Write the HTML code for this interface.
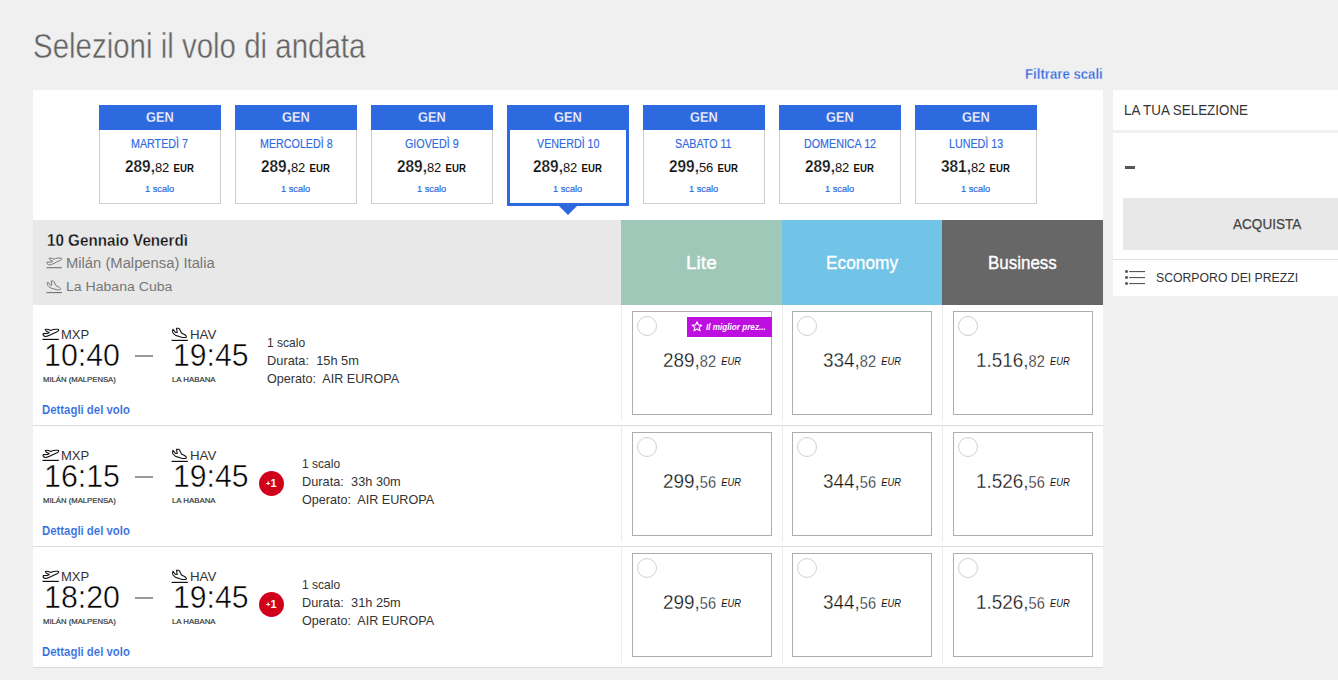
<!DOCTYPE html><html><head><meta charset="utf-8"><style>body{margin:0;width:1338px;height:680px;overflow:hidden;background:#f0f0f0;font-family:"Liberation Sans",sans-serif;position:relative}.t{position:absolute;line-height:1;white-space:nowrap}</style></head><body>
<div style="position:absolute;left:33px;top:90px;width:1070px;height:578px;background:#fff"></div>
<div style="position:absolute;left:99px;top:105px;width:122px;height:25px;background:#2d69df"></div>
<div style="position:absolute;left:99px;top:130px;width:120px;height:73px;border:1px solid #cfcfcf;border-top:0;background:#fff"></div>
<div style="position:absolute;left:235px;top:105px;width:122px;height:25px;background:#2d69df"></div>
<div style="position:absolute;left:235px;top:130px;width:120px;height:73px;border:1px solid #cfcfcf;border-top:0;background:#fff"></div>
<div style="position:absolute;left:371px;top:105px;width:122px;height:25px;background:#2d69df"></div>
<div style="position:absolute;left:371px;top:130px;width:120px;height:73px;border:1px solid #cfcfcf;border-top:0;background:#fff"></div>
<div style="position:absolute;left:507px;top:105px;width:122px;height:101px;background:#2d69df"></div>
<div style="position:absolute;left:510px;top:130px;width:116px;height:73px;background:#fff"></div>
<div style="position:absolute;left:559px;top:206px;width:0;height:0;border-left:9px solid transparent;border-right:9px solid transparent;border-top:9px solid #2d69df"></div>
<div style="position:absolute;left:643px;top:105px;width:122px;height:25px;background:#2d69df"></div>
<div style="position:absolute;left:643px;top:130px;width:120px;height:73px;border:1px solid #cfcfcf;border-top:0;background:#fff"></div>
<div style="position:absolute;left:779px;top:105px;width:122px;height:25px;background:#2d69df"></div>
<div style="position:absolute;left:779px;top:130px;width:120px;height:73px;border:1px solid #cfcfcf;border-top:0;background:#fff"></div>
<div style="position:absolute;left:915px;top:105px;width:122px;height:25px;background:#2d69df"></div>
<div style="position:absolute;left:915px;top:130px;width:120px;height:73px;border:1px solid #cfcfcf;border-top:0;background:#fff"></div>
<div style="position:absolute;left:33px;top:220px;width:588px;height:85px;background:#e8e8e8"></div>
<div style="position:absolute;left:621px;top:220px;width:161px;height:85px;background:#9fc8b9"></div>
<div style="position:absolute;left:782px;top:220px;width:160px;height:85px;background:#71c4e8"></div>
<div style="position:absolute;left:942px;top:220px;width:161px;height:85px;background:#676767"></div>
<svg width="22" height="18" viewBox="0 0 22 18" style="position:absolute;left:43.9px;top:254px;transform:scale(0.95);transform-origin:0 0"><path d="M5.3 4.5 C7 4 9 4.6 10.6 5.5 C12.5 4.5 14.5 4 18 4.3 C19.2 4.6 19 5.6 17.5 6.5 L9.5 10.3 C8 11 6 11.6 5 11.4 C3.5 11 2.8 10 3.2 8.6 L7.6 8.5 L9.2 7.6 L6.4 6.2 Z" fill="none" stroke="#777" stroke-width="1.05" stroke-linejoin="round"/><path d="M2.5 14.4 H18.8" stroke="#777" stroke-width="1.2"/></svg>
<svg width="22" height="18" viewBox="0 0 22 18" style="position:absolute;left:44.4px;top:276.5px;transform:scale(0.95);transform-origin:0 0"><path d="M4 5.3 C3.3 6.5 3.3 8 4 9 C5 10.5 7.5 12 10 12.4 L13.5 13.5 C15 13.6 16.5 13.6 17.2 13.2 C17.8 12.6 17 11.3 15 10.3 L12.5 9 L10.5 5 C10.2 4.4 9.8 4.2 9.5 4.2 L7.5 4.2 L8.2 8.5 L6.5 8.5 Z" fill="none" stroke="#777" stroke-width="1.05" stroke-linejoin="round"/><path d="M2.6 16.4 H18.8" stroke="#777" stroke-width="1.2"/></svg>
<div style="position:absolute;left:33px;top:425px;width:1070px;height:1px;background:#dcdcdc"></div>
<div style="position:absolute;left:621px;top:305px;width:1px;height:116px;background:#ececec"></div>
<div style="position:absolute;left:782px;top:305px;width:1px;height:116px;background:#ececec"></div>
<div style="position:absolute;left:942px;top:305px;width:1px;height:116px;background:#ececec"></div>
<svg width="22" height="18" viewBox="0 0 22 18" style="position:absolute;left:40px;top:325px;transform:scale(1);transform-origin:0 0"><path d="M5.3 4.5 C7 4 9 4.6 10.6 5.5 C12.5 4.5 14.5 4 18 4.3 C19.2 4.6 19 5.6 17.5 6.5 L9.5 10.3 C8 11 6 11.6 5 11.4 C3.5 11 2.8 10 3.2 8.6 L7.6 8.5 L9.2 7.6 L6.4 6.2 Z" fill="none" stroke="#111" stroke-width="1.1" stroke-linejoin="round"/><path d="M2.5 14.4 H18.8" stroke="#111" stroke-width="1.2"/></svg>
<svg width="22" height="18" viewBox="0 0 22 18" style="position:absolute;left:169px;top:324px;transform:scale(1);transform-origin:0 0"><path d="M4 5.3 C3.3 6.5 3.3 8 4 9 C5 10.5 7.5 12 10 12.4 L13.5 13.5 C15 13.6 16.5 13.6 17.2 13.2 C17.8 12.6 17 11.3 15 10.3 L12.5 9 L10.5 5 C10.2 4.4 9.8 4.2 9.5 4.2 L7.5 4.2 L8.2 8.5 L6.5 8.5 Z" fill="none" stroke="#111" stroke-width="1.1" stroke-linejoin="round"/><path d="M2.6 16.4 H18.8" stroke="#111" stroke-width="1.2"/></svg>
<div style="position:absolute;left:135px;top:355px;width:18px;height:2px;background:#999"></div>
<div style="position:absolute;left:632px;top:311px;width:138px;height:102px;border:1px solid #adadad;background:#fff"></div>
<div style="position:absolute;left:637px;top:316px;width:18px;height:18px;border:1px solid #d0d0d0;border-radius:50%"></div>
<div style="position:absolute;left:792px;top:311px;width:138px;height:102px;border:1px solid #adadad;background:#fff"></div>
<div style="position:absolute;left:797px;top:316px;width:18px;height:18px;border:1px solid #d0d0d0;border-radius:50%"></div>
<div style="position:absolute;left:953px;top:311px;width:138px;height:102px;border:1px solid #adadad;background:#fff"></div>
<div style="position:absolute;left:958px;top:316px;width:18px;height:18px;border:1px solid #d0d0d0;border-radius:50%"></div>
<div style="position:absolute;left:687px;top:317px;width:85px;height:20px;background:#bd0fe0"></div>
<svg width="12" height="11" viewBox="0 0 12 11" style="position:absolute;left:691px;top:321px"><path d="M6 0.8 L7.4 3.9 L10.8 4.2 L8.2 6.4 L9 9.8 L6 8 L3 9.8 L3.8 6.4 L1.2 4.2 L4.6 3.9 Z" fill="none" stroke="#fff" stroke-width="1.1" stroke-linejoin="round"/></svg>
<div style="position:absolute;left:33px;top:546px;width:1070px;height:1px;background:#dcdcdc"></div>
<div style="position:absolute;left:621px;top:426px;width:1px;height:116px;background:#ececec"></div>
<div style="position:absolute;left:782px;top:426px;width:1px;height:116px;background:#ececec"></div>
<div style="position:absolute;left:942px;top:426px;width:1px;height:116px;background:#ececec"></div>
<svg width="22" height="18" viewBox="0 0 22 18" style="position:absolute;left:40px;top:446px;transform:scale(1);transform-origin:0 0"><path d="M5.3 4.5 C7 4 9 4.6 10.6 5.5 C12.5 4.5 14.5 4 18 4.3 C19.2 4.6 19 5.6 17.5 6.5 L9.5 10.3 C8 11 6 11.6 5 11.4 C3.5 11 2.8 10 3.2 8.6 L7.6 8.5 L9.2 7.6 L6.4 6.2 Z" fill="none" stroke="#111" stroke-width="1.1" stroke-linejoin="round"/><path d="M2.5 14.4 H18.8" stroke="#111" stroke-width="1.2"/></svg>
<svg width="22" height="18" viewBox="0 0 22 18" style="position:absolute;left:169px;top:445px;transform:scale(1);transform-origin:0 0"><path d="M4 5.3 C3.3 6.5 3.3 8 4 9 C5 10.5 7.5 12 10 12.4 L13.5 13.5 C15 13.6 16.5 13.6 17.2 13.2 C17.8 12.6 17 11.3 15 10.3 L12.5 9 L10.5 5 C10.2 4.4 9.8 4.2 9.5 4.2 L7.5 4.2 L8.2 8.5 L6.5 8.5 Z" fill="none" stroke="#111" stroke-width="1.1" stroke-linejoin="round"/><path d="M2.6 16.4 H18.8" stroke="#111" stroke-width="1.2"/></svg>
<div style="position:absolute;left:135px;top:476px;width:18px;height:2px;background:#999"></div>
<div style="position:absolute;left:259px;top:471px;width:25px;height:25px;border-radius:50%;background:#d0021b"></div>
<div style="position:absolute;left:632px;top:432px;width:138px;height:102px;border:1px solid #adadad;background:#fff"></div>
<div style="position:absolute;left:637px;top:437px;width:18px;height:18px;border:1px solid #d0d0d0;border-radius:50%"></div>
<div style="position:absolute;left:792px;top:432px;width:138px;height:102px;border:1px solid #adadad;background:#fff"></div>
<div style="position:absolute;left:797px;top:437px;width:18px;height:18px;border:1px solid #d0d0d0;border-radius:50%"></div>
<div style="position:absolute;left:953px;top:432px;width:138px;height:102px;border:1px solid #adadad;background:#fff"></div>
<div style="position:absolute;left:958px;top:437px;width:18px;height:18px;border:1px solid #d0d0d0;border-radius:50%"></div>
<div style="position:absolute;left:33px;top:667px;width:1070px;height:1px;background:#dcdcdc"></div>
<div style="position:absolute;left:621px;top:547px;width:1px;height:116px;background:#ececec"></div>
<div style="position:absolute;left:782px;top:547px;width:1px;height:116px;background:#ececec"></div>
<div style="position:absolute;left:942px;top:547px;width:1px;height:116px;background:#ececec"></div>
<svg width="22" height="18" viewBox="0 0 22 18" style="position:absolute;left:40px;top:567px;transform:scale(1);transform-origin:0 0"><path d="M5.3 4.5 C7 4 9 4.6 10.6 5.5 C12.5 4.5 14.5 4 18 4.3 C19.2 4.6 19 5.6 17.5 6.5 L9.5 10.3 C8 11 6 11.6 5 11.4 C3.5 11 2.8 10 3.2 8.6 L7.6 8.5 L9.2 7.6 L6.4 6.2 Z" fill="none" stroke="#111" stroke-width="1.1" stroke-linejoin="round"/><path d="M2.5 14.4 H18.8" stroke="#111" stroke-width="1.2"/></svg>
<svg width="22" height="18" viewBox="0 0 22 18" style="position:absolute;left:169px;top:566px;transform:scale(1);transform-origin:0 0"><path d="M4 5.3 C3.3 6.5 3.3 8 4 9 C5 10.5 7.5 12 10 12.4 L13.5 13.5 C15 13.6 16.5 13.6 17.2 13.2 C17.8 12.6 17 11.3 15 10.3 L12.5 9 L10.5 5 C10.2 4.4 9.8 4.2 9.5 4.2 L7.5 4.2 L8.2 8.5 L6.5 8.5 Z" fill="none" stroke="#111" stroke-width="1.1" stroke-linejoin="round"/><path d="M2.6 16.4 H18.8" stroke="#111" stroke-width="1.2"/></svg>
<div style="position:absolute;left:135px;top:597px;width:18px;height:2px;background:#999"></div>
<div style="position:absolute;left:259px;top:592px;width:25px;height:25px;border-radius:50%;background:#d0021b"></div>
<div style="position:absolute;left:632px;top:553px;width:138px;height:102px;border:1px solid #adadad;background:#fff"></div>
<div style="position:absolute;left:637px;top:558px;width:18px;height:18px;border:1px solid #d0d0d0;border-radius:50%"></div>
<div style="position:absolute;left:792px;top:553px;width:138px;height:102px;border:1px solid #adadad;background:#fff"></div>
<div style="position:absolute;left:797px;top:558px;width:18px;height:18px;border:1px solid #d0d0d0;border-radius:50%"></div>
<div style="position:absolute;left:953px;top:553px;width:138px;height:102px;border:1px solid #adadad;background:#fff"></div>
<div style="position:absolute;left:958px;top:558px;width:18px;height:18px;border:1px solid #d0d0d0;border-radius:50%"></div>
<div style="position:absolute;left:1113px;top:90px;width:225px;height:40px;background:#fff"></div>
<div style="position:absolute;left:1113px;top:133px;width:225px;height:126px;background:#fff"></div>
<div style="position:absolute;left:1113px;top:259px;width:225px;height:1px;background:#dedede"></div>
<div style="position:absolute;left:1113px;top:260px;width:225px;height:36px;background:#fff"></div>
<div style="position:absolute;left:1125px;top:166px;width:10px;height:3px;background:#555"></div>
<div style="position:absolute;left:1123px;top:198px;width:215px;height:52px;background:#e8e8e8"></div>
<svg width="21" height="16" viewBox="0 0 21 16" style="position:absolute;left:1125px;top:270px"><rect x="0.2" y="0.3" width="2.6" height="2.4" fill="#444"/><rect x="0.2" y="6.3" width="2.6" height="2.4" fill="#444"/><rect x="0.2" y="12.3" width="2.6" height="2.4" fill="#444"/><rect x="4.2" y="1" width="15.8" height="1.1" fill="#555"/><rect x="4.2" y="7" width="15.8" height="1.1" fill="#555"/><rect x="4.2" y="13" width="15.8" height="1.1" fill="#555"/></svg>
<div class="t" style="left:32.66px;top:27.70px;font-size:35.00px;font-weight:400;font-style:normal;color:#646464;transform:scaleX(0.8414);transform-origin:0 0;-webkit-text-stroke:0.4px #f0f0f0;">Selezioni il volo di andata</div>
<div class="t" style="left:1025.04px;top:67.80px;font-size:13.72px;font-weight:700;font-style:normal;color:#2d69df;transform:scaleX(0.9620);transform-origin:0 0;-webkit-text-stroke:0.3px #f0f0f0;">Filtrare scali</div>
<div class="t" style="left:146.36px;top:110.00px;font-size:14.54px;font-weight:700;font-style:normal;color:#fff;transform:scaleX(0.8800);transform-origin:0 0;-webkit-text-stroke:0.3px #2d69df;">GEN</div>
<div class="t" style="left:131.20px;top:139.20px;font-size:11.92px;font-weight:400;font-style:normal;color:#2d69df;transform:scaleX(0.9000);transform-origin:0 0;-webkit-text-stroke:0.15px #2d69df;">MARTEDÌ 7</div>
<div class="t" style="left:125.44px;top:159.00px;font-size:16.00px;font-weight:400;font-style:normal;color:#111;transform:scaleX(0.9600);transform-origin:0 0;"><b style="font-size:16px;-webkit-text-stroke:0.25px #fff">289,</b><span style="font-size:13.5px">82</span> <b style="font-size:10px">EUR</b></div>
<div class="t" style="left:144.97px;top:183.80px;font-size:9.52px;font-weight:400;font-style:normal;color:#2d69df;transform:scaleX(0.9700);transform-origin:0 0;-webkit-text-stroke:0.2px #2d69df;">1 scalo</div>
<div class="t" style="left:282.36px;top:110.00px;font-size:14.54px;font-weight:700;font-style:normal;color:#fff;transform:scaleX(0.8800);transform-origin:0 0;-webkit-text-stroke:0.3px #2d69df;">GEN</div>
<div class="t" style="left:259.55px;top:139.20px;font-size:11.92px;font-weight:400;font-style:normal;color:#2d69df;transform:scaleX(0.9000);transform-origin:0 0;-webkit-text-stroke:0.15px #2d69df;">MERCOLEDÌ 8</div>
<div class="t" style="left:261.44px;top:159.00px;font-size:16.00px;font-weight:400;font-style:normal;color:#111;transform:scaleX(0.9600);transform-origin:0 0;"><b style="font-size:16px;-webkit-text-stroke:0.25px #fff">289,</b><span style="font-size:13.5px">82</span> <b style="font-size:10px">EUR</b></div>
<div class="t" style="left:280.96px;top:183.80px;font-size:9.52px;font-weight:400;font-style:normal;color:#2d69df;transform:scaleX(0.9700);transform-origin:0 0;-webkit-text-stroke:0.2px #2d69df;">1 scalo</div>
<div class="t" style="left:418.36px;top:110.00px;font-size:14.54px;font-weight:700;font-style:normal;color:#fff;transform:scaleX(0.8800);transform-origin:0 0;-webkit-text-stroke:0.3px #2d69df;">GEN</div>
<div class="t" style="left:405.45px;top:139.20px;font-size:11.92px;font-weight:400;font-style:normal;color:#2d69df;transform:scaleX(0.9000);transform-origin:0 0;-webkit-text-stroke:0.15px #2d69df;">GIOVEDÌ 9</div>
<div class="t" style="left:397.44px;top:159.00px;font-size:16.00px;font-weight:400;font-style:normal;color:#111;transform:scaleX(0.9600);transform-origin:0 0;"><b style="font-size:16px;-webkit-text-stroke:0.25px #fff">289,</b><span style="font-size:13.5px">82</span> <b style="font-size:10px">EUR</b></div>
<div class="t" style="left:416.96px;top:183.80px;font-size:9.52px;font-weight:400;font-style:normal;color:#2d69df;transform:scaleX(0.9700);transform-origin:0 0;-webkit-text-stroke:0.2px #2d69df;">1 scalo</div>
<div class="t" style="left:554.36px;top:110.00px;font-size:14.54px;font-weight:700;font-style:normal;color:#fff;transform:scaleX(0.8800);transform-origin:0 0;-webkit-text-stroke:0.3px #2d69df;">GEN</div>
<div class="t" style="left:536.95px;top:139.20px;font-size:11.92px;font-weight:400;font-style:normal;color:#2d69df;transform:scaleX(0.9000);transform-origin:0 0;-webkit-text-stroke:0.15px #2d69df;">VENERDÌ 10</div>
<div class="t" style="left:533.44px;top:159.00px;font-size:16.00px;font-weight:400;font-style:normal;color:#111;transform:scaleX(0.9600);transform-origin:0 0;"><b style="font-size:16px;-webkit-text-stroke:0.25px #fff">289,</b><span style="font-size:13.5px">82</span> <b style="font-size:10px">EUR</b></div>
<div class="t" style="left:552.97px;top:183.80px;font-size:9.52px;font-weight:400;font-style:normal;color:#2d69df;transform:scaleX(0.9700);transform-origin:0 0;-webkit-text-stroke:0.2px #2d69df;">1 scalo</div>
<div class="t" style="left:690.36px;top:110.00px;font-size:14.54px;font-weight:700;font-style:normal;color:#fff;transform:scaleX(0.8800);transform-origin:0 0;-webkit-text-stroke:0.3px #2d69df;">GEN</div>
<div class="t" style="left:675.20px;top:139.20px;font-size:11.92px;font-weight:400;font-style:normal;color:#2d69df;transform:scaleX(0.9000);transform-origin:0 0;-webkit-text-stroke:0.15px #2d69df;">SABATO 11</div>
<div class="t" style="left:669.44px;top:159.00px;font-size:16.00px;font-weight:400;font-style:normal;color:#111;transform:scaleX(0.9600);transform-origin:0 0;"><b style="font-size:16px;-webkit-text-stroke:0.25px #fff">299,</b><span style="font-size:13.5px">56</span> <b style="font-size:10px">EUR</b></div>
<div class="t" style="left:688.97px;top:183.80px;font-size:9.52px;font-weight:400;font-style:normal;color:#2d69df;transform:scaleX(0.9700);transform-origin:0 0;-webkit-text-stroke:0.2px #2d69df;">1 scalo</div>
<div class="t" style="left:826.36px;top:110.00px;font-size:14.54px;font-weight:700;font-style:normal;color:#fff;transform:scaleX(0.8800);transform-origin:0 0;-webkit-text-stroke:0.3px #2d69df;">GEN</div>
<div class="t" style="left:803.55px;top:139.20px;font-size:11.92px;font-weight:400;font-style:normal;color:#2d69df;transform:scaleX(0.9000);transform-origin:0 0;-webkit-text-stroke:0.15px #2d69df;">DOMENICA 12</div>
<div class="t" style="left:805.44px;top:159.00px;font-size:16.00px;font-weight:400;font-style:normal;color:#111;transform:scaleX(0.9600);transform-origin:0 0;"><b style="font-size:16px;-webkit-text-stroke:0.25px #fff">289,</b><span style="font-size:13.5px">82</span> <b style="font-size:10px">EUR</b></div>
<div class="t" style="left:824.97px;top:183.80px;font-size:9.52px;font-weight:400;font-style:normal;color:#2d69df;transform:scaleX(0.9700);transform-origin:0 0;-webkit-text-stroke:0.2px #2d69df;">1 scalo</div>
<div class="t" style="left:962.36px;top:110.00px;font-size:14.54px;font-weight:700;font-style:normal;color:#fff;transform:scaleX(0.8800);transform-origin:0 0;-webkit-text-stroke:0.3px #2d69df;">GEN</div>
<div class="t" style="left:948.55px;top:139.20px;font-size:11.92px;font-weight:400;font-style:normal;color:#2d69df;transform:scaleX(0.9000);transform-origin:0 0;-webkit-text-stroke:0.15px #2d69df;">LUNEDÌ 13</div>
<div class="t" style="left:941.44px;top:159.00px;font-size:16.00px;font-weight:400;font-style:normal;color:#111;transform:scaleX(0.9600);transform-origin:0 0;"><b style="font-size:16px;-webkit-text-stroke:0.25px #fff">381,</b><span style="font-size:13.5px">82</span> <b style="font-size:10px">EUR</b></div>
<div class="t" style="left:960.97px;top:183.80px;font-size:9.52px;font-weight:400;font-style:normal;color:#2d69df;transform:scaleX(0.9700);transform-origin:0 0;-webkit-text-stroke:0.2px #2d69df;">1 scalo</div>
<div class="t" style="left:46.66px;top:232.00px;font-size:16.24px;font-weight:700;font-style:normal;color:#111;transform:scaleX(0.9356);transform-origin:0 0;-webkit-text-stroke:0.3px #e8e8e8;">10 Gennaio Venerdì</div>
<div class="t" style="left:65.98px;top:256.00px;font-size:14.56px;font-weight:400;font-style:normal;color:#777;transform:scaleX(1.0158);transform-origin:0 0;">Milán (Malpensa) Italia</div>
<div class="t" style="left:65.96px;top:279.50px;font-size:13.58px;font-weight:400;font-style:normal;color:#777;transform:scaleX(1.0363);transform-origin:0 0;">La Habana Cuba</div>
<div class="t" style="left:685.75px;top:254.00px;font-size:18.20px;font-weight:400;font-style:normal;color:#fff;transform:scaleX(1.0500);transform-origin:0 0;-webkit-text-stroke:0.35px #fff;">Lite</div>
<div class="t" style="left:825.55px;top:254.00px;font-size:18.20px;font-weight:400;font-style:normal;color:#fff;transform:scaleX(0.9507);transform-origin:0 0;-webkit-text-stroke:0.35px #fff;">Economy</div>
<div class="t" style="left:987.67px;top:254.00px;font-size:18.20px;font-weight:400;font-style:normal;color:#fff;transform:scaleX(0.9315);transform-origin:0 0;-webkit-text-stroke:0.35px #fff;">Business</div>
<div class="t" style="left:61.04px;top:327.70px;font-size:13.52px;font-weight:400;font-style:normal;color:#333;transform:scaleX(0.9643);transform-origin:0 0;">MXP</div>
<div class="t" style="left:190.02px;top:327.70px;font-size:13.52px;font-weight:400;font-style:normal;color:#333;transform:scaleX(0.9846);transform-origin:0 0;">HAV</div>
<div class="t" style="left:43.80px;top:339.00px;font-size:31.98px;font-weight:400;font-style:normal;color:#000;transform:scaleX(0.9494);transform-origin:0 0;-webkit-text-stroke:0.5px #fff;">10:40</div>
<div class="t" style="left:172.51px;top:339.00px;font-size:31.98px;font-weight:400;font-style:normal;color:#000;transform:scaleX(0.9429);transform-origin:0 0;-webkit-text-stroke:0.5px #fff;">19:45</div>
<div class="t" style="left:43.00px;top:375.90px;font-size:7.99px;font-weight:400;font-style:normal;color:#333;transform:scaleX(0.9653);transform-origin:0 0;-webkit-text-stroke:0.2px #333;">MILÁN (MALPENSA)</div>
<div class="t" style="left:171.80px;top:375.90px;font-size:7.99px;font-weight:400;font-style:normal;color:#333;transform:scaleX(0.9822);transform-origin:0 0;-webkit-text-stroke:0.2px #333;">LA HABANA</div>
<div class="t" style="left:267.04px;top:337.00px;font-size:12.60px;font-weight:400;font-style:normal;color:#333;transform:scaleX(0.9564);transform-origin:0 0;">1 scalo</div>
<div class="t" style="left:266.98px;top:355.00px;font-size:12.60px;font-weight:400;font-style:normal;color:#333;transform:scaleX(1.0180);transform-origin:0 0;">Durata:&nbsp; 15h 5m</div>
<div class="t" style="left:267.00px;top:373.00px;font-size:12.60px;font-weight:400;font-style:normal;color:#333;">Operato:&nbsp; AIR EUROPA</div>
<div class="t" style="left:42.11px;top:403.80px;font-size:12.79px;font-weight:700;font-style:normal;color:#2d69df;transform:scaleX(0.8898);transform-origin:0 0;-webkit-text-stroke:0.15px #fff;">Dettagli del volo</div>
<div class="t" style="left:662.98px;top:350.00px;font-size:20.00px;font-weight:400;font-style:normal;color:#111;transform:scaleX(0.9300);transform-origin:0 0;"><span style="-webkit-text-stroke:0.3px #fff"><span style="font-size:20.35px">289,</span><span style="font-size:15.70px">82</span></span> <i style="font-size:10.03px;vertical-align:2px;color:#111">EUR</i></div>
<div class="t" style="left:822.98px;top:350.00px;font-size:20.00px;font-weight:400;font-style:normal;color:#111;transform:scaleX(0.9300);transform-origin:0 0;"><span style="-webkit-text-stroke:0.3px #fff"><span style="font-size:20.35px">334,</span><span style="font-size:15.70px">82</span></span> <i style="font-size:10.03px;vertical-align:2px;color:#111">EUR</i></div>
<div class="t" style="left:976.07px;top:350.00px;font-size:20.00px;font-weight:400;font-style:normal;color:#111;transform:scaleX(0.9300);transform-origin:0 0;"><span style="-webkit-text-stroke:0.3px #fff"><span style="font-size:20.35px">1.516,</span><span style="font-size:15.70px">82</span></span> <i style="font-size:10.03px;vertical-align:2px;color:#111">EUR</i></div>
<div class="t" style="left:705.70px;top:323.00px;font-size:9.38px;font-weight:700;font-style:italic;color:#fff;transform:scaleX(0.8691);transform-origin:0 0;">Il miglior prez...</div>
<div class="t" style="left:61.04px;top:448.70px;font-size:13.52px;font-weight:400;font-style:normal;color:#333;transform:scaleX(0.9643);transform-origin:0 0;">MXP</div>
<div class="t" style="left:190.02px;top:448.70px;font-size:13.52px;font-weight:400;font-style:normal;color:#333;transform:scaleX(0.9846);transform-origin:0 0;">HAV</div>
<div class="t" style="left:43.80px;top:460.00px;font-size:31.98px;font-weight:400;font-style:normal;color:#000;transform:scaleX(0.9494);transform-origin:0 0;-webkit-text-stroke:0.5px #fff;">16:15</div>
<div class="t" style="left:172.51px;top:460.00px;font-size:31.98px;font-weight:400;font-style:normal;color:#000;transform:scaleX(0.9429);transform-origin:0 0;-webkit-text-stroke:0.5px #fff;">19:45</div>
<div class="t" style="left:43.00px;top:496.90px;font-size:7.99px;font-weight:400;font-style:normal;color:#333;transform:scaleX(0.9653);transform-origin:0 0;-webkit-text-stroke:0.2px #333;">MILÁN (MALPENSA)</div>
<div class="t" style="left:171.80px;top:496.90px;font-size:7.99px;font-weight:400;font-style:normal;color:#333;transform:scaleX(0.9822);transform-origin:0 0;-webkit-text-stroke:0.2px #333;">LA HABANA</div>
<div class="t" style="left:302.04px;top:458.00px;font-size:12.60px;font-weight:400;font-style:normal;color:#333;transform:scaleX(0.9564);transform-origin:0 0;">1 scalo</div>
<div class="t" style="left:301.99px;top:476.00px;font-size:12.60px;font-weight:400;font-style:normal;color:#333;transform:scaleX(1.0150);transform-origin:0 0;">Durata:&nbsp; 33h 30m</div>
<div class="t" style="left:302.00px;top:494.00px;font-size:12.60px;font-weight:400;font-style:normal;color:#333;">Operato:&nbsp; AIR EUROPA</div>
<div class="t" style="left:42.11px;top:524.80px;font-size:12.79px;font-weight:700;font-style:normal;color:#2d69df;transform:scaleX(0.8898);transform-origin:0 0;-webkit-text-stroke:0.15px #fff;">Dettagli del volo</div>
<div class="t" style="left:266.00px;top:478.00px;font-size:10.90px;font-weight:700;font-style:normal;color:#fff;"><span style="font-size:70%;vertical-align:1px">+</span>1</div>
<div class="t" style="left:662.98px;top:471.00px;font-size:20.00px;font-weight:400;font-style:normal;color:#111;transform:scaleX(0.9300);transform-origin:0 0;"><span style="-webkit-text-stroke:0.3px #fff"><span style="font-size:20.35px">299,</span><span style="font-size:15.70px">56</span></span> <i style="font-size:10.03px;vertical-align:2px;color:#111">EUR</i></div>
<div class="t" style="left:822.98px;top:471.00px;font-size:20.00px;font-weight:400;font-style:normal;color:#111;transform:scaleX(0.9300);transform-origin:0 0;"><span style="-webkit-text-stroke:0.3px #fff"><span style="font-size:20.35px">344,</span><span style="font-size:15.70px">56</span></span> <i style="font-size:10.03px;vertical-align:2px;color:#111">EUR</i></div>
<div class="t" style="left:976.07px;top:471.00px;font-size:20.00px;font-weight:400;font-style:normal;color:#111;transform:scaleX(0.9300);transform-origin:0 0;"><span style="-webkit-text-stroke:0.3px #fff"><span style="font-size:20.35px">1.526,</span><span style="font-size:15.70px">56</span></span> <i style="font-size:10.03px;vertical-align:2px;color:#111">EUR</i></div>
<div class="t" style="left:61.04px;top:569.70px;font-size:13.52px;font-weight:400;font-style:normal;color:#333;transform:scaleX(0.9643);transform-origin:0 0;">MXP</div>
<div class="t" style="left:190.02px;top:569.70px;font-size:13.52px;font-weight:400;font-style:normal;color:#333;transform:scaleX(0.9846);transform-origin:0 0;">HAV</div>
<div class="t" style="left:43.80px;top:581.00px;font-size:31.98px;font-weight:400;font-style:normal;color:#000;transform:scaleX(0.9494);transform-origin:0 0;-webkit-text-stroke:0.5px #fff;">18:20</div>
<div class="t" style="left:172.51px;top:581.00px;font-size:31.98px;font-weight:400;font-style:normal;color:#000;transform:scaleX(0.9429);transform-origin:0 0;-webkit-text-stroke:0.5px #fff;">19:45</div>
<div class="t" style="left:43.00px;top:617.90px;font-size:7.99px;font-weight:400;font-style:normal;color:#333;transform:scaleX(0.9653);transform-origin:0 0;-webkit-text-stroke:0.2px #333;">MILÁN (MALPENSA)</div>
<div class="t" style="left:171.80px;top:617.90px;font-size:7.99px;font-weight:400;font-style:normal;color:#333;transform:scaleX(0.9822);transform-origin:0 0;-webkit-text-stroke:0.2px #333;">LA HABANA</div>
<div class="t" style="left:302.04px;top:579.00px;font-size:12.60px;font-weight:400;font-style:normal;color:#333;transform:scaleX(0.9564);transform-origin:0 0;">1 scalo</div>
<div class="t" style="left:301.99px;top:597.00px;font-size:12.60px;font-weight:400;font-style:normal;color:#333;transform:scaleX(1.0150);transform-origin:0 0;">Durata:&nbsp; 31h 25m</div>
<div class="t" style="left:302.00px;top:615.00px;font-size:12.60px;font-weight:400;font-style:normal;color:#333;">Operato:&nbsp; AIR EUROPA</div>
<div class="t" style="left:42.11px;top:645.80px;font-size:12.79px;font-weight:700;font-style:normal;color:#2d69df;transform:scaleX(0.8898);transform-origin:0 0;-webkit-text-stroke:0.15px #fff;">Dettagli del volo</div>
<div class="t" style="left:266.00px;top:599.00px;font-size:10.90px;font-weight:700;font-style:normal;color:#fff;"><span style="font-size:70%;vertical-align:1px">+</span>1</div>
<div class="t" style="left:662.98px;top:592.00px;font-size:20.00px;font-weight:400;font-style:normal;color:#111;transform:scaleX(0.9300);transform-origin:0 0;"><span style="-webkit-text-stroke:0.3px #fff"><span style="font-size:20.35px">299,</span><span style="font-size:15.70px">56</span></span> <i style="font-size:10.03px;vertical-align:2px;color:#111">EUR</i></div>
<div class="t" style="left:822.98px;top:592.00px;font-size:20.00px;font-weight:400;font-style:normal;color:#111;transform:scaleX(0.9300);transform-origin:0 0;"><span style="-webkit-text-stroke:0.3px #fff"><span style="font-size:20.35px">344,</span><span style="font-size:15.70px">56</span></span> <i style="font-size:10.03px;vertical-align:2px;color:#111">EUR</i></div>
<div class="t" style="left:976.07px;top:592.00px;font-size:20.00px;font-weight:400;font-style:normal;color:#111;transform:scaleX(0.9300);transform-origin:0 0;"><span style="-webkit-text-stroke:0.3px #fff"><span style="font-size:20.35px">1.526,</span><span style="font-size:15.70px">56</span></span> <i style="font-size:10.03px;vertical-align:2px;color:#111">EUR</i></div>
<div class="t" style="left:1124.05px;top:103.00px;font-size:14.10px;font-weight:400;font-style:normal;color:#333;transform:scaleX(0.9496);transform-origin:0 0;">LA TUA SELEZIONE</div>
<div class="t" style="left:1233.30px;top:217.30px;font-size:14.68px;font-weight:400;font-style:normal;color:#444;transform:scaleX(0.9243);transform-origin:0 0;-webkit-text-stroke:0.25px #444;">ACQUISTA</div>
<div class="t" style="left:1156.30px;top:270.70px;font-size:13.66px;font-weight:400;font-style:normal;color:#333;transform:scaleX(0.8962);transform-origin:0 0;">SCORPORO DEI PREZZI</div>
</body></html>
